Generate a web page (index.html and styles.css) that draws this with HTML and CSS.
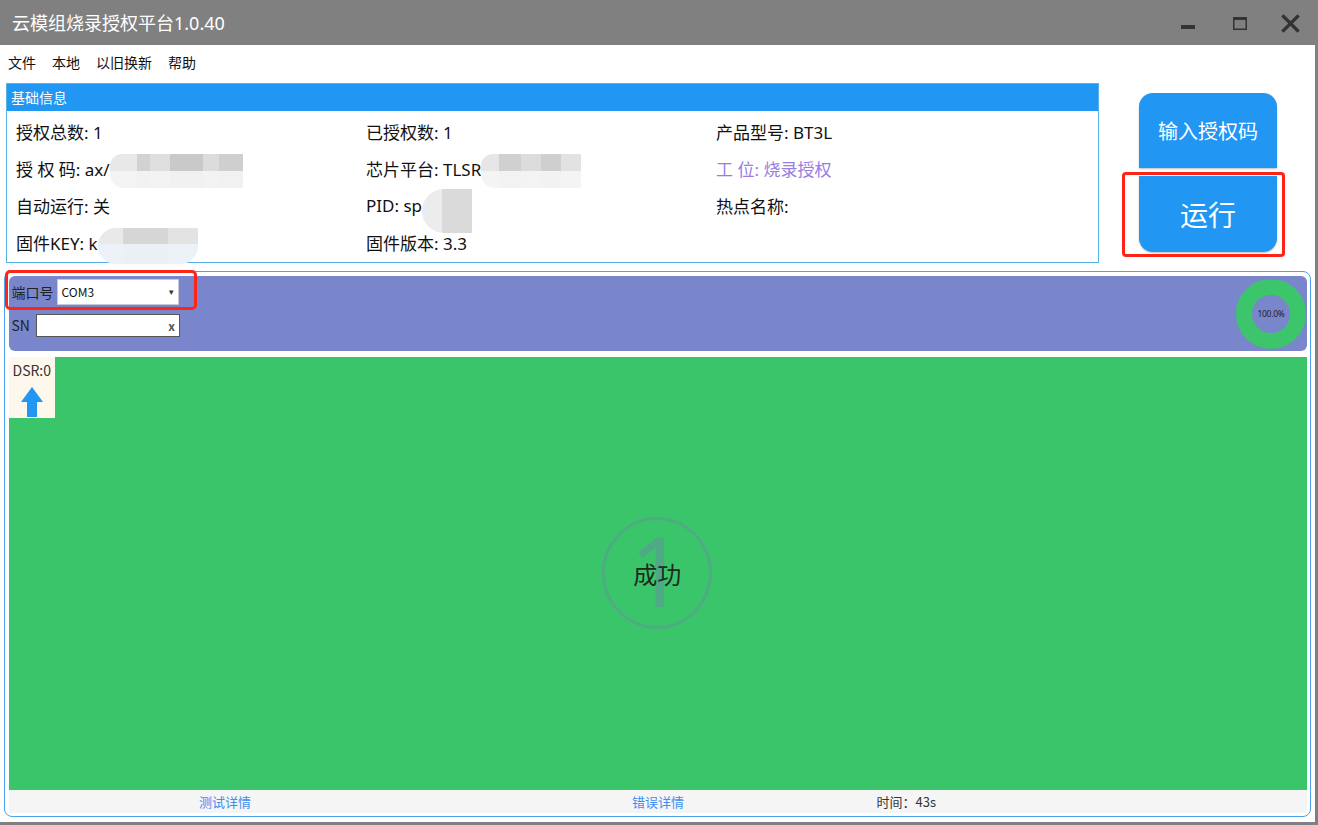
FILE: index.html
```html
<!DOCTYPE html>
<html lang="zh-CN">
<head>
<meta charset="utf-8">
<title>云模组烧录授权平台1.0.40</title>
<link rel="stylesheet" href="styles.css">
</head>
<body>
<div class="window">
  <div class="titlebar">
    <div class="title">云模组烧录授权平台1.0.40</div>
    <div class="controls">
      <svg class="ctl" width="50" height="45" viewBox="0 0 50 45"><rect x="16" y="25" width="14" height="4" fill="#333"/></svg>
      <svg class="ctl" width="50" height="45" viewBox="0 0 50 45"><rect x="18.75" y="17.75" width="12.5" height="11.5" fill="none" stroke="#333" stroke-width="1.5"/><rect x="18" y="17" width="14" height="3" fill="#333"/></svg>
      <svg class="ctl" width="50" height="45" viewBox="0 0 50 45"><path d="M18.5 16.5 L32.5 30.5 M32.5 16.5 L18.5 30.5" stroke="#333" stroke-width="3.2" stroke-linecap="square"/></svg>
    </div>
  </div>
  <div class="menubar">
    <span class="menu-item">文件</span>
    <span class="menu-item">本地</span>
    <span class="menu-item">以旧换新</span>
    <span class="menu-item">帮助</span>
  </div>
  <div class="top">
    <section class="info">
      <div class="info-head">基础信息</div>
      <div class="info-grid">
        <div class="cell">授权总数: 1</div>
        <div class="cell">已授权数: 1</div>
        <div class="cell">产品型号: BT3L</div>
        <div class="cell">授 权 码: ax/<span class="blur blur-a"></span></div>
        <div class="cell">芯片平台: TLSR<span class="blur blur-b"></span></div>
        <div class="cell purple">工 位: 烧录授权</div>
        <div class="cell">自动运行: 关</div>
        <div class="cell">PID: sp<span class="blur blur-c"></span></div>
        <div class="cell">热点名称:</div>
        <div class="cell">固件KEY: k<span class="blur blur-d"></span></div>
        <div class="cell">固件版本: 3.3</div>
        <div class="cell"></div>
      </div>
    </section>
    <div class="actions">
      <button class="btn btn-code">输入授权码</button>
      <div class="run-wrap"><button class="btn btn-run">运行</button></div>
    </div>
  </div>
  <section class="panel">
    <div class="port-bar">
      <div class="port-fields">
        <div class="field port-field">
          <span class="label">端口号</span>
          <div class="select"><span>COM3</span><span class="caret">▾</span></div>
        </div>
        <div class="field">
          <span class="label">SN</span>
          <div class="sn-input"><span class="clear">x</span></div>
        </div>
      </div>
      <div class="donut"><span>100.0%</span></div>
    </div>
    <div class="stage">
      <div class="dsr">
        <div class="dsr-text">DSR:0</div>
        <svg width="24" height="30" viewBox="0 0 24 30" class="arrow"><path d="M12 0 L23 15 L17 15 L17 30 L7 30 L7 15 L1 15 Z" fill="#2196f3"/></svg>
      </div>
      <div class="result">
        <span class="big-num">1</span>
        <span class="result-text">成功</span>
      </div>
    </div>
    <div class="footer">
      <div class="fcol link">测试详情</div>
      <div class="fcol link">错误详情</div>
      <div class="fcol time">时间：43s</div>
    </div>
  </section>
</div>
</body>
</html>
```
FILE: styles.css
```css
* { box-sizing: border-box; }
html, body { margin: 0; padding: 0; }
body {
  width: 1318px;
  height: 825px;
  overflow: hidden;
  background: #fff;
  font-family: "Noto Sans", "Noto Sans CJK SC", sans-serif;
  color: #111;
}
.window {
  width: 1318px;
  height: 825px;
  border-right: 3px solid #808080;
  border-bottom: 3px solid #808080;
  display: flex;
  flex-direction: column;
}
.titlebar {
  height: 45px;
  flex: none;
  background: #808080;
  display: flex;
  align-items: center;
  justify-content: space-between;
  margin-right: -3px;
}
.title {
  color: #fff;
  font-size: 18px;
  padding-left: 12px;
  padding-bottom: 2px;
}
.controls { display: flex; padding-right: 3px; }
.ctl { display: block; }
.menubar {
  height: 38px;
  flex: none;
  display: flex;
  align-items: center;
  padding-left: 8px;
  padding-bottom: 4px;
  font-size: 14px;
  gap: 16px;
  color: #111;
}
.top {
  display: flex;
  height: 180px;
  flex: none;
}
.info {
  margin-left: 6px;
  width: 1093px;
  height: 180px;
  border: 1px solid #55b3e6;
  display: flex;
  flex-direction: column;
}
.info-head {
  height: 27px;
  background: #2196f3;
  color: #fff;
  font-size: 14px;
  line-height: 27px;
  padding-left: 4px;
}
.info-grid {
  display: grid;
  grid-template-columns: 350px 350px 1fr;
  grid-auto-rows: 37px;
  padding-top: 2px;
  padding-left: 9px;
  font-size: 17px;
}
.cell {
  display: flex;
  align-items: center;
  white-space: nowrap;
}
.purple { color: #9a7de4; }
.blur {
  display: inline-block;
  vertical-align: middle;
  border-radius: 12px 0 0 14px;
}
.blur-a {
  width: 133px; height: 34px;
  background:
    linear-gradient(to bottom, rgba(255,255,255,0) 50%, rgba(245,245,245,0.9) 50%),
    linear-gradient(to right, #e8e8e8 0 20%, #d2d2d2 20% 30%, #dedede 30% 45%, #c9c9c9 45% 70%, #dcdcdc 70% 82%, #cfcfcf 82%);
  margin-top: 4px;
}
.blur-b {
  width: 100px; height: 34px;
  background:
    linear-gradient(to bottom, rgba(255,255,255,0) 50%, rgba(246,246,246,0.9) 50%),
    linear-gradient(to right, #e6e6e6 0 18%, #d0d0d0 18% 40%, #dcdcdc 40% 60%, #cfcfcf 60% 80%, #e2e2e2 80%);
  margin-top: 4px;
}
.blur-c {
  width: 50px; height: 44px;
  border-radius: 22px 0 0 22px;
  background: linear-gradient(to right, #ececec 0 40%, #dadada 40%);
  margin-top: 10px;
}
.blur-d {
  width: 100px; height: 36px;
  border-radius: 18px 0 18px 18px;
  background:
    linear-gradient(to bottom, rgba(255,255,255,0) 45%, rgba(236,242,248,0.95) 45%),
    linear-gradient(to right, #e9e9e9 0 25%, #d6d6d6 25% 70%, #e3e3e3 70%);
  margin-top: 6px;
}
.actions {
  margin-left: 40px;
  width: 138px;
  padding-top: 10px;
  display: flex;
  flex-direction: column;
  gap: 8px;
}
.btn {
  display: block;
  width: 138px;
  border: none;
  background: #2196f3;
  color: #fff;
  font-family: "Noto Sans CJK SC", sans-serif;
  padding: 0;
  box-shadow: 0 1px 2px rgba(0,0,0,0.25);
}
.btn-code {
  height: 75px;
  border-radius: 14px 14px 0 0;
  font-size: 20px;
}
.run-wrap { position: relative; }
.run-wrap::after {
  content: "";
  position: absolute;
  left: -17px; right: -8px; top: -4px; bottom: -5px;
  border: 3px solid #ff2418;
  border-radius: 4px;
  pointer-events: none;
}
.btn-run {
  height: 76px;
  border-radius: 0 0 14px 14px;
  font-size: 28px;
}
.panel {
  margin: 8px 4px 5px 4px;
  flex: 1;
  border: 1.5px solid #4aa3ec;
  border-radius: 8px;
  padding: 3.5px 3px 3px 3.5px;
  display: flex;
  flex-direction: column;
}
.port-bar {
  height: 75px;
  flex: none;
  background: #7986cb;
  border-radius: 6px;
  display: flex;
  justify-content: space-between;
  align-items: center;
  padding: 3px 1px 0 3px;
}
.port-fields {
  display: flex;
  flex-direction: column;
  gap: 9px;
  align-self: flex-start;
}
.field {
  display: flex;
  align-items: center;
  font-size: 14px;
  color: #222;
  font-family: "Noto Sans CJK SC", sans-serif;
}
.port-field { position: relative; }
.port-field::after {
  content: "";
  position: absolute;
  left: -7px; right: -17px; top: -9px; bottom: -5px;
  border: 3px solid #ff2418;
  border-radius: 5px;
  pointer-events: none;
}
.label { margin-right: 3px; }
.select {
  width: 122px;
  height: 26px;
  background: #fff;
  border: 1px solid #c9c9d6;
  display: flex;
  align-items: center;
  justify-content: space-between;
  padding: 0 4px 0 4px;
  font-size: 12px;
  color: #111;
}
.caret { font-size: 9px; color: #333; }
.sn-input {
  width: 144px;
  height: 23px;
  margin-left: 3px;
  background: #fff;
  border: 1px solid #555;
  display: flex;
  align-items: center;
  justify-content: flex-end;
  padding-right: 4px;
}
.clear { font-size: 12px; color: #555; font-weight: bold; }
.donut {
  width: 70px;
  height: 70px;
  border-radius: 50%;
  border: 16.5px solid #3cc56b;
  display: flex;
  align-items: center;
  justify-content: center;
  margin-top: -2px;
}
.donut span { font-size: 8.5px; color: #222; white-space: nowrap; letter-spacing: -0.3px; }
.stage {
  margin-top: 6px;
  flex: 1;
  background: #3bc56b;
  position: relative;
  display: flex;
  align-items: center;
  justify-content: center;
}
.dsr {
  position: absolute;
  left: 0; top: 0;
  width: 46px;
  height: 61px;
  background: #fdf7ec;
  padding: 5px 0 0 4px;
}
.dsr-text { font-size: 14px; color: #333; line-height: 17px; font-family: "Noto Sans CJK SC", sans-serif; }
.arrow { display: block; margin: 8px 0 0 7px; }
.result {
  width: 110px;
  height: 112px;
  border-radius: 50%;
  border: 3px solid rgba(95, 150, 150, 0.55);
  position: relative;
  display: flex;
  align-items: center;
  justify-content: center;
  margin-left: -1px;
}
.big-num {
  position: absolute;
  font-family: "Noto Sans", sans-serif;
  font-size: 96px;
  line-height: 1;
  color: rgba(95, 150, 150, 0.6);
  top: 2px;
  left: 50%;
  transform: translateX(-50%);
}
.result-text {
  position: relative;
  font-size: 24px;
  color: #1c2b22;
  font-family: "Noto Sans CJK SC", sans-serif;
}
.footer {
  height: 23px;
  flex: none;
  background: #f5f5f5;
  display: grid;
  grid-template-columns: 433px 433px 1fr;
  font-size: 13px;
  align-items: center;
  font-family: "Noto Sans CJK SC", sans-serif;
}
.fcol.link { text-align: center; color: #3d8ff0; }
.fcol.time { color: #333; padding-left: 2px; }
```
